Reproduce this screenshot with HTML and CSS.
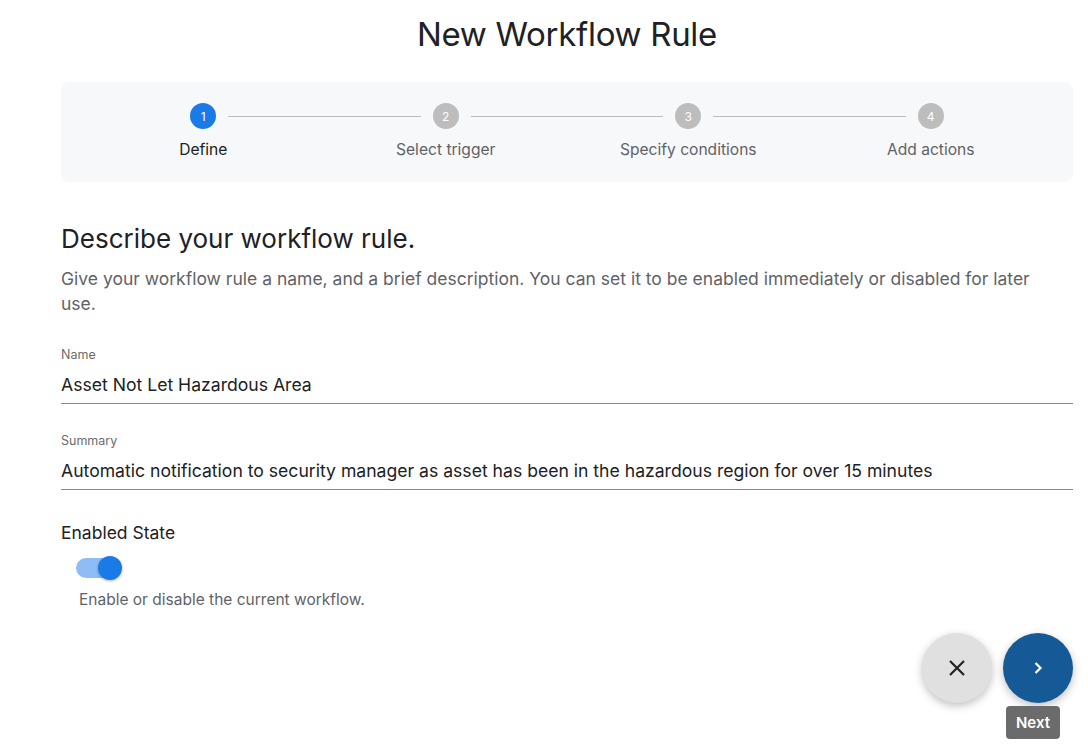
FILE: index.html
```html
<!DOCTYPE html>
<html>
<head>
    <title>New Workflow Rule</title>
    <link rel="stylesheet" href="styles.css">
</head>
<body>
    <div class="page">
        <h1 class="page-title">New Workflow Rule</h1>

        <div class="stepper">
            <div class="step active">
                <div class="step-head"><span class="step-num">1</span></div>
                <div class="step-label">Define</div>
            </div>
            <div class="step">
                <div class="step-head"><span class="step-num">2</span></div>
                <div class="step-label">Select trigger</div>
            </div>
            <div class="step">
                <div class="step-head"><span class="step-num">3</span></div>
                <div class="step-label">Specify conditions</div>
            </div>
            <div class="step">
                <div class="step-head"><span class="step-num">4</span></div>
                <div class="step-label">Add actions</div>
            </div>
        </div>

        <h2 class="section-title">Describe your workflow rule.</h2>
        <p class="section-desc">Give your workflow rule a name, and a brief description. You can set it to be enabled immediately or disabled for later use.</p>

        <div class="field">
            <label class="field-label">Name</label>
            <div class="field-value">Asset Not Let Hazardous Area</div>
        </div>
        <div class="field">
            <label class="field-label">Summary</label>
            <div class="field-value">Automatic notification to security manager as asset has been in the hazardous region for over 15 minutes</div>
        </div>

        <div class="state">
            <div class="state-title">Enabled State</div>
            <div class="toggle"><span class="toggle-thumb"></span></div>
            <div class="state-help">Enable or disable the current workflow.</div>
        </div>
    </div>

    <div class="fab-bar">
        <button class="fab fab-cancel" aria-label="Cancel">
            <svg width="20" height="20" viewBox="0 0 20 20"><path d="M3 3 L17 17 M17 3 L3 17" stroke="#222" stroke-width="2.2" fill="none"/></svg>
        </button>
        <button class="fab fab-next" aria-label="Next">
            <svg width="14" height="14" viewBox="0 0 14 14"><path d="M4.5 2 L9.5 7 L4.5 12" stroke="#fff" stroke-width="2.2" fill="none"/></svg>
            <span class="tooltip">Next</span>
        </button>
    </div>
</body>
</html>
```

FILE: styles.css
```css
body {
    margin: 0;
    padding: 0;
    font-family: Inter, "Noto Sans", sans-serif;
    color: #202124;
    background: #fff;
}
.page {
    width: 1012px;
    margin-left: 61px;
}
.page-title {
    font-size: 33px;
    font-weight: 400;
    text-align: center;
    margin: 0;
    padding-top: 14px;
    line-height: 40px;
    letter-spacing: -0.3px;
}
.stepper {
    display: grid;
    grid-template-columns: repeat(4, 1fr);
    background: #f7f8fa;
    border-radius: 8px;
    margin-top: 28px;
    padding: 21px 21px 0;
    height: 79px;
}
.step {
    display: flex;
    flex-direction: column;
    align-items: center;
    position: relative;
}
.step-head {
    display: flex;
    justify-content: center;
    width: 100%;
}
.step:not(:last-child)::after {
    content: "";
    position: absolute;
    top: 13px;
    left: calc(50% + 25px);
    right: calc(-50% + 25px);
    height: 1px;
    background: #bdbdbd;
}
.step-num {
    width: 26px;
    height: 26px;
    border-radius: 50%;
    background: #bdbdbd;
    color: #fff;
    font-size: 12px;
    display: flex;
    align-items: center;
    justify-content: center;
}
.step.active .step-num {
    background: #1a7be8;
}
.step-label {
    margin-top: 11px;
    font-size: 15.6px;
    color: #5f6368;
}
.step.active .step-label {
    color: #202124;
}
.section-title {
    font-size: 26px;
    font-weight: 400;
    margin: 42px 0 0;
    line-height: 30px;
}
.section-desc {
    font-size: 17.5px;
    line-height: 25px;
    color: #5f6368;
    margin: 12px 0 0;
    padding-right: 30px;
}
.field {
    margin-top: 31px;
    border-bottom: 1px solid #8a8a8a;
    padding-bottom: 7px;
}
.field + .field {
    margin-top: 29px;
}
.field-label {
    display: block;
    font-size: 12.5px;
    color: #6b6b6b;
    line-height: 16px;
}
.field-value {
    font-size: 17.6px;
    margin-top: 11px;
    line-height: 22px;
}
.state {
    margin-top: 32px;
}
.state-title {
    font-size: 17.5px;
    line-height: 22px;
}
.toggle {
    position: relative;
    width: 44px;
    height: 20px;
    border-radius: 10px;
    background: #8fbcf5;
    margin: 14px 0 0 15px;
}
.toggle-thumb {
    position: absolute;
    right: -2px;
    top: -2px;
    width: 24px;
    height: 24px;
    border-radius: 50%;
    background: #1a7be8;
    box-shadow: 0 1px 3px rgba(0, 0, 0, 0.3);
}
.state-help {
    font-size: 15.5px;
    color: #5f6368;
    margin: 12px 0 0 18px;
}
.fab-bar {
    position: fixed;
    right: 15px;
    top: 633px;
    display: flex;
    gap: 11px;
}
.fab {
    width: 70px;
    height: 70px;
    border-radius: 50%;
    border: none;
    display: flex;
    align-items: center;
    justify-content: center;
    cursor: pointer;
    position: relative;
    box-shadow: 0 3px 8px rgba(0, 0, 0, 0.25);
}
.fab-cancel {
    background: #e0e0e0;
}
.fab-next {
    background: #155a96;
}
.tooltip {
    position: absolute;
    top: 73px;
    left: 3px;
    width: 54px;
    height: 33px;
    border-radius: 4px;
    background: #6b6b6b;
    color: #fff;
    font-family: Inter, "Noto Sans", sans-serif;
    font-size: 15px;
    font-weight: 600;
    display: flex;
    align-items: center;
    justify-content: center;
}
```
